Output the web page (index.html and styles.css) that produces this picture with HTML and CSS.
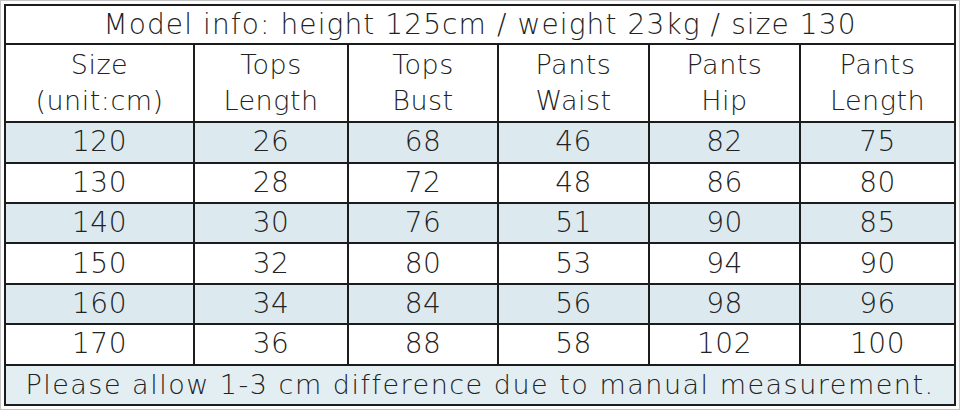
FILE: index.html
```html
<!DOCTYPE html>
<html>
<head>
<meta charset="utf-8">
<link rel="stylesheet" href="styles.css">
</head>
<body>
<div class="frame">
<table class="chart">
  <colgroup>
    <col class="c1"><col class="c2"><col class="c3"><col class="c4"><col class="c5"><col class="c6">
  </colgroup>
  <tr class="title"><td colspan="6">Model info: height 125cm / weight 23kg / size 130</td></tr>
  <tr class="head">
    <td>Size<br>(unit:cm)</td>
    <td>Tops<br>Length</td>
    <td>Tops<br>Bust</td>
    <td>Pants<br>Waist</td>
    <td>Pants<br>Hip</td>
    <td>Pants<br>Length</td>
  </tr>
  <tr class="row shade"><td>120</td><td>26</td><td>68</td><td>46</td><td>82</td><td>75</td></tr>
  <tr class="row"><td>130</td><td>28</td><td>72</td><td>48</td><td>86</td><td>80</td></tr>
  <tr class="row shade"><td>140</td><td>30</td><td>76</td><td>51</td><td>90</td><td>85</td></tr>
  <tr class="row"><td>150</td><td>32</td><td>80</td><td>53</td><td>94</td><td>90</td></tr>
  <tr class="row shade"><td>160</td><td>34</td><td>84</td><td>56</td><td>98</td><td>96</td></tr>
  <tr class="row"><td>170</td><td>36</td><td>88</td><td>58</td><td>102</td><td>100</td></tr>
  <tr class="foot"><td colspan="6">Please allow 1-3 cm difference due to manual measurement.</td></tr>
</table>
</div>
</body>
</html>
```
FILE: styles.css
```css
html, body {
  margin: 0;
  padding: 0;
  background: #ffffff;
}
.frame {
  width: 960px;
  height: 410px;
  box-sizing: border-box;
  border: 1px solid #c4c4c4;
  padding: 3px;
  background: #fdfdfd;
}
.chart {
  width: 952px;
  height: 402px;
  border-collapse: collapse;
  table-layout: fixed;
  border: 2px solid #1c1c1c;
  font-family: "DejaVu Sans", sans-serif;
  font-weight: 300;
  color: #222;
}
.c1 { width: 189px; }
.c2 { width: 154px; }
.c3 { width: 150px; }
.c4 { width: 151px; }
.c5 { width: 151px; }
.c6 { width: 155px; }
.chart td {
  border: 2px solid #1c1c1c;
  text-align: center;
  padding: 0;
  font-size: 27px;
  letter-spacing: 0.5px;
  line-height: 1;
}
.title td {
  height: 37px;
  font-size: 28px;
  letter-spacing: 1.1px;
  background: #fff;
}
.head td {
  height: 75px;
  line-height: 36px;
  font-size: 27px;
  background: #fff;
}
.row td {
  height: 38px;
  font-size: 28px;
  background: #fff;
}
.row.shade td {
  background: #dce9ef;
}
.foot td {
  height: 38px;
  font-size: 27px;
  letter-spacing: 1.5px;
  background: #e3eef2;
}
```
